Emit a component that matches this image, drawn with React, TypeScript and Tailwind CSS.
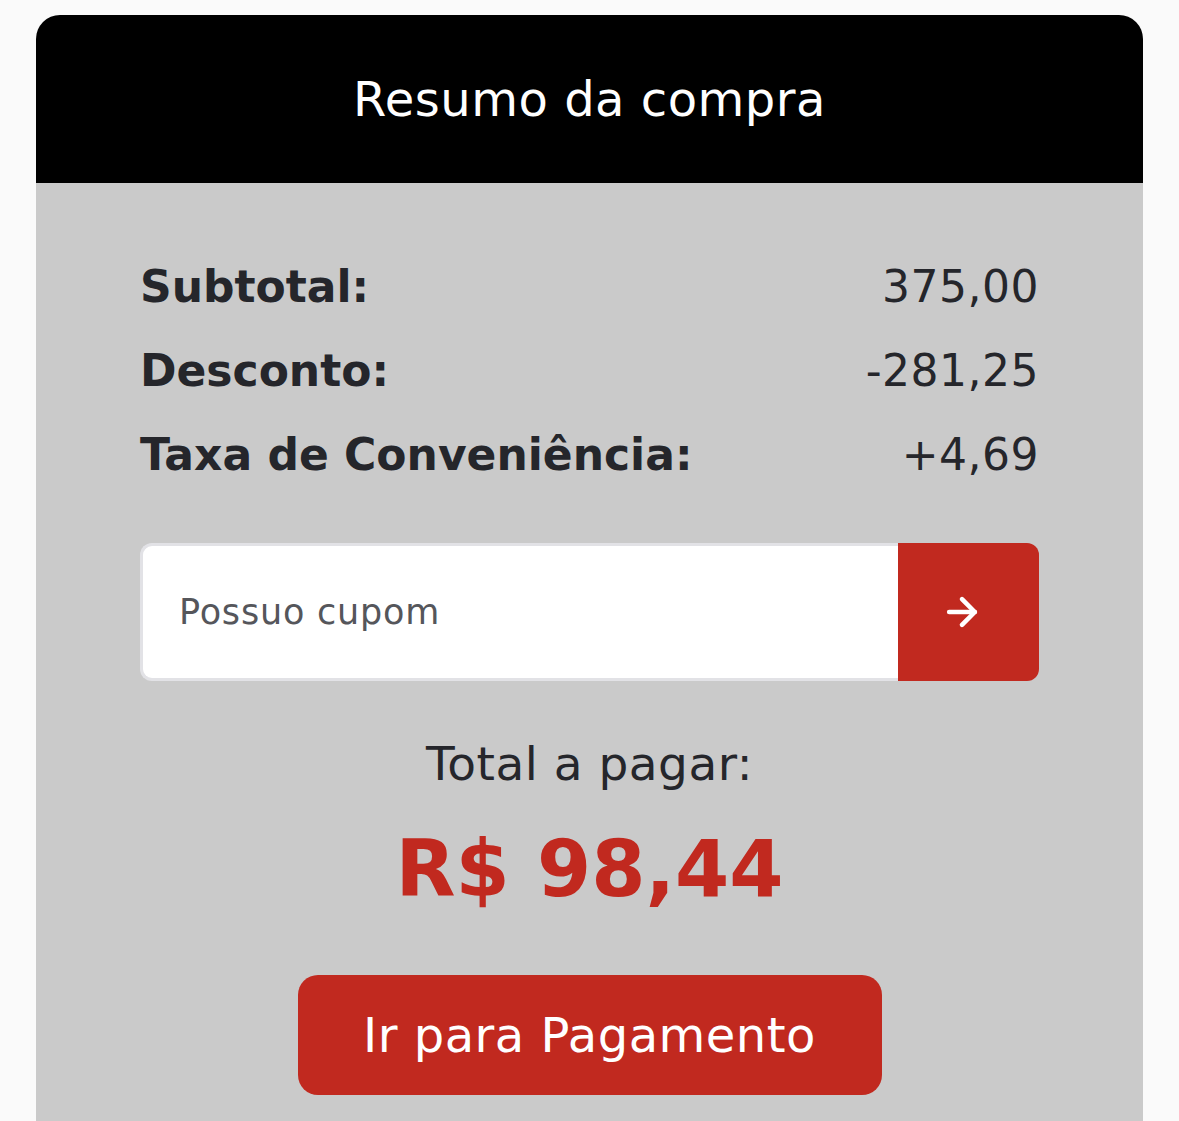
import { ArrowRight } from "lucide-react";

const rows = [
  { label: "Subtotal:", value: "375,00" },
  { label: "Desconto:", value: "-281,25" },
  { label: "Taxa de Conveniência:", value: "+4,69" },
];

export default function App() {
  return (
    <div
      className="min-h-[1121px] bg-[#fafafa] px-[36px] pt-[15px]"
      style={{ fontFamily: '"DejaVu Sans", sans-serif' }}
    >
      <div className="overflow-hidden rounded-t-[24px]">
        {/* Header */}
        <div className="flex h-[168px] items-center justify-center bg-black">
          <h1 className="text-[48px] font-normal tracking-[0.5px] text-white">Resumo da compra</h1>
        </div>

        {/* Body */}
        <div className="h-[938px] bg-[#cacaca] px-[104px] pt-[72px]">
          <div className="flex flex-col gap-[20px] text-[#25262b]">
            {rows.map((r) => (
              <div key={r.label} className="flex h-[64px] items-center justify-between">
                <span className="text-[44px] font-bold">{r.label}</span>
                <span className="text-[44px] tracking-[0.5px]">{r.value}</span>
              </div>
            ))}
          </div>

          <div className="mt-[56px] flex h-[138px]">
            <div className="flex flex-1 items-center rounded-l-[12px] border-[3px] border-r-0 border-[#e2e2e6] bg-white pl-[36px]">
              <span className="text-[35px] tracking-[0.8px] text-[#55565b]">Possuo cupom</span>
            </div>
            <button className="flex w-[141px] items-center justify-center rounded-r-[12px] bg-[#c1291f] pr-[14px] text-white">
              <ArrowRight size={44} strokeWidth={2.5} />
            </button>
          </div>

          <div className="mt-[48px] flex flex-col items-center">
            <p className="text-[47px] tracking-[0.5px] text-[#25262b]">Total a pagar:</p>
            <p className="mt-[30px] text-[78px] font-bold leading-none text-[#c1291f]">R$ 98,44</p>
            <button className="mt-[67px] h-[120px] w-[584px] rounded-[20px] bg-[#c1291f] text-[48px] tracking-[0.5px] text-white">
              Ir para Pagamento
            </button>
          </div>
        </div>
      </div>
    </div>
  );
}
